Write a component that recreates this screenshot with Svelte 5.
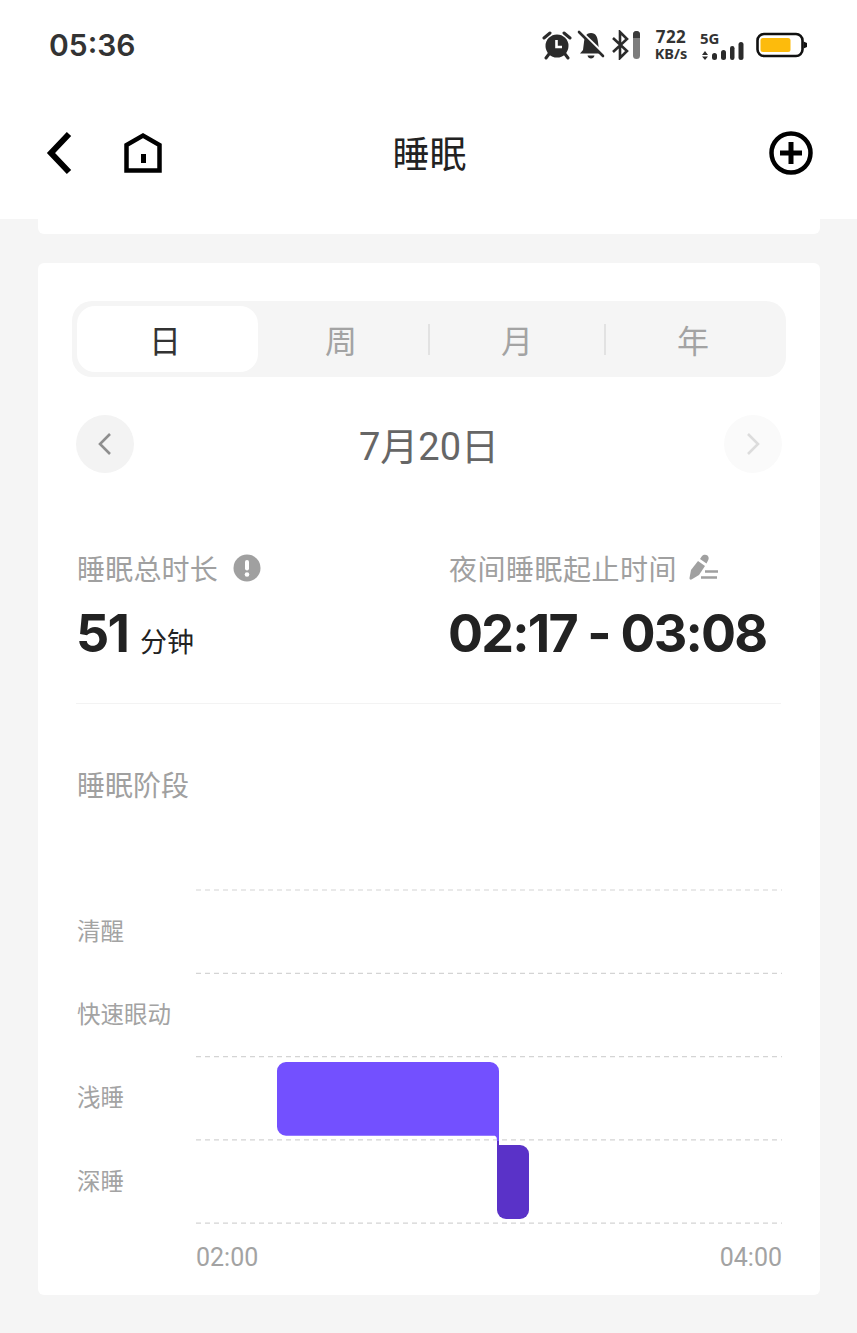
<script>
	const tabs = ['日', '周', '月', '年'];
	const stages = ['清醒', '快速眼动', '浅睡', '深睡'];
	const gridLines = [1, 84.3, 167.6, 250.9, 334.2];
</script>

<div class="page">
	<header class="top">
		<div class="status">
			<span class="clock">05:36</span>
			<div class="status-icons">
				<!-- alarm -->
				<svg width="30" height="30" viewBox="0 0 30 30">
					<path d="M2 8 L8 3 M28 8 L22 3" stroke="#2b2b2b" stroke-width="3" stroke-linecap="round" />
					<path d="M7 24 L4 28 M23 24 L26 28" stroke="#2b2b2b" stroke-width="3" stroke-linecap="round" />
					<circle cx="15" cy="16" r="11.5" fill="#2b2b2b" />
					<path d="M14.5 10 V17 H20" fill="none" stroke="#fff" stroke-width="2.6" />
				</svg>
				<!-- muted bell -->
				<svg class="bell" width="28" height="30" viewBox="0 0 28 30">
					<path d="M14 3 C8.500 3 7.500 8 7 12 L6 20 L3 23.500 H25 L22 20 L21 12 C20.500 7 19 3 14 3 Z" fill="#2b2b2b" />
					<path d="M10.500 25.500 C11 29.500 17 29.500 17.500 25.500 Z" fill="#2b2b2b" />
					<path d="M3 1 L28 25" stroke="#fff" stroke-width="3" />
					<path d="M2 2 L26 26" stroke="#2b2b2b" stroke-width="2.600" stroke-linecap="round" />
				</svg>
				<!-- bluetooth with level -->
				<svg class="bt" width="30" height="30" viewBox="0 0 30 30">
					<path d="M2 8 L16 21 L9 28 V2 L16 9 L2 22" fill="none" stroke="#2b2b2b" stroke-width="2.600" />
					<rect x="22" y="1" width="7" height="28" rx="3.500" fill="#7d7d7d" />
					<path d="M22 4.500 A3.500 3.500 0 0 1 29 4.500 V8 H22 Z" fill="#3a3a3a" />
				</svg>
				<div class="speed">
					<span class="num">722</span>
					<span class="unit">KB/s</span>
				</div>
				<div class="signal">
					<span class="net">5G</span>
					<svg width="44" height="30" viewBox="0 0 44 30">
						<path d="M2 25 L5 21 L8 25 Z M2 26.500 L8 26.500 L5 30 Z" fill="#2b2b2b" />
						<rect x="12" y="23" width="5" height="7" rx="2.500" fill="#2b2b2b" />
						<rect x="21" y="20" width="5" height="10" rx="2.500" fill="#2b2b2b" />
						<rect x="30" y="16" width="4.500" height="14" rx="2.200" fill="#2b2b2b" />
						<rect x="38.500" y="12" width="5" height="18" rx="2.500" fill="#2b2b2b" />
					</svg>
				</div>
				<svg class="battery" width="52" height="26" viewBox="0 0 52 26">
					<rect x="1.500" y="2" width="45" height="22" rx="6.500" fill="#fff" stroke="#111" stroke-width="2.600" />
					<rect x="4.500" y="6" width="30" height="14" rx="2.500" fill="#fdbb0c" />
					<path d="M47.500 9.500 L51 11 V15 L47.500 16.500 Z" fill="#111" />
				</svg>
			</div>
		</div>
		<nav class="title-bar">
			<div class="nav-left">
				<svg width="30" height="44" viewBox="0 0 30 44">
					<path d="M24 3 L6 22 L24 41" fill="none" stroke="#000" stroke-width="6" />
				</svg>
				<svg width="40" height="42" viewBox="0 0 40 42">
					<path d="M3.500 38.500 V13 L20 3.500 L36.500 13 V38.500 Z" fill="none" stroke="#000" stroke-width="4.500" />
					<rect x="18" y="22" width="5" height="9" fill="#000" />
				</svg>
			</div>
			<h1>睡眠</h1>
			<svg width="44" height="44" viewBox="0 0 44 44">
				<circle cx="22" cy="22" r="19.500" fill="none" stroke="#000" stroke-width="4.500" />
				<path d="M22 11 V33 M11 22 H33" stroke="#000" stroke-width="5" />
			</svg>
		</nav>
	</header>

	<div class="stub"></div>

	<section class="card">
		<div class="tabs">
			{#each tabs as tab, i}
				<div class="tab" class:active={i === 0} class:sep={i > 1}>{tab}</div>
			{/each}
		</div>

		<div class="date-row">
			<div class="round">
				<svg width="16" height="26" viewBox="0 0 16 26">
					<path d="M13 3 L3 13 L13 23" fill="none" stroke="#8e8e8e" stroke-width="2.600" />
				</svg>
			</div>
			<span class="date">7月20日</span>
			<div class="round faint">
				<svg width="16" height="26" viewBox="0 0 16 26">
					<path d="M3 3 L13 13 L3 23" fill="none" stroke="#dcdcdc" stroke-width="2.600" />
				</svg>
			</div>
		</div>

		<div class="stats">
			<div class="stat total">
				<div class="label">
					睡眠总时长
					<svg width="28" height="28" viewBox="0 0 28 28">
						<circle cx="14" cy="14" r="13.500" fill="#a0a0a0" />
						<rect x="12" y="6" width="4" height="10.500" rx="2" fill="#fff" />
						<circle cx="14" cy="20.500" r="2.300" fill="#fff" />
					</svg>
				</div>
				<div class="value">51<small>分钟</small></div>
			</div>
			<div class="stat night">
				<div class="label">
					夜间睡眠起止时间
					<svg width="30" height="28" viewBox="0 0 30 28">
						<path d="M9 7 L16 12 L10 21 L2.500 25.500 C1.300 26 0.500 25.300 0.500 24 L2 16 Z" fill="#a0a0a0" />
						<path d="M11 5 L13 2 C14.500 0.300 17 0.300 18.500 1.500 C20 3 20 5 19 6.500 L17.500 9.500 Z" fill="#a0a0a0" />
						<path d="M16 17.500 H29 M12 23.500 H28" stroke="#a0a0a0" stroke-width="2.500" />
					</svg>
				</div>
				<div class="value">02:17 - 03:08</div>
			</div>
		</div>

		<div class="stage-title">睡眠阶段</div>

		<div class="chart">
			<div class="stage-labels">
				{#each stages as stage}
					<span>{stage}</span>
				{/each}
			</div>
			<div class="plot">
				<svg width="586" height="336" viewBox="0 0 586 336">
					{#each gridLines as y}
						<line x1="0" x2="586" y1={y} y2={y} stroke="#d4d4d4" stroke-width="1.200" stroke-dasharray="5 4" />
					{/each}
					<path d="M301 256 V321 A9 9 0 0 0 310 330 H324 A9 9 0 0 0 333 321 V265 A9 9 0 0 0 324 256 Z" fill="#5a32c8" />
					<rect x="301" y="251" width="2" height="6" fill="#5a32c8" />
					<path d="M90 173 H294 A9 9 0 0 1 303 182 V252 H301 C301 249 300.500 246.700 298 246.700 H90 A9 9 0 0 1 81 237.700 V182 A9 9 0 0 1 90 173 Z" fill="#7350ff" />
				</svg>
				<div class="axis">
					<span>02:00</span>
					<span>04:00</span>
				</div>
			</div>
		</div>
	</section>
</div>

<style>
	:global(body) {
		margin: 0;
		background: #f5f5f5;
	}

	.page {
		width: 857px;
		height: 1333px;
		overflow: hidden;
		background: #f5f5f5;
		font-family: 'Noto Sans CJK SC', 'Noto Sans', sans-serif;
		color: #222;
	}

	.top {
		height: 219px;
		background: #fff;
		box-sizing: border-box;
		padding: 0 45px;
	}

	.status {
		height: 90px;
		display: flex;
		align-items: center;
		justify-content: space-between;
		padding: 0 4px;
	}

	.clock {
		font-family: Inter, sans-serif;
		font-size: 30px;
		font-weight: 600;
		color: #333;
	}

	.status-icons {
		display: flex;
		align-items: center;
		gap: 7px;
	}

	.bell {
		margin-left: -2px;
	}

	.bt {
		margin-left: -1px;
	}

	.speed {
		display: flex;
		flex-direction: column;
		align-items: center;
		width: 36px;
		margin-left: 5px;
		font-family: 'Noto Sans', sans-serif;
		font-weight: 700;
		color: #333;
		line-height: 16px;
	}

	.num {
		font-size: 17px;
		letter-spacing: 0.5px;
	}

	.unit {
		font-size: 14.500px;
		white-space: nowrap;
	}

	.signal {
		position: relative;
		width: 44px;
		height: 30px;
		margin-left: 4px;
	}

	.net {
		position: absolute;
		left: 0;
		top: 0;
		font-family: 'Noto Sans', sans-serif;
		font-size: 15px;
		font-weight: 700;
		line-height: 16px;
		color: #333;
	}

	.battery {
		margin-left: 5px;
	}

	.title-bar {
		display: flex;
		align-items: center;
		justify-content: space-between;
		height: 125px;
		position: relative;
		margin-right: -1px;
	}

	.nav-left {
		display: flex;
		align-items: center;
		gap: 48px;
	}

	h1 {
		position: absolute;
		left: 0;
		right: 0;
		top: 37px;
		margin: 0;
		padding-left: 1px;
		text-align: center;
		font-size: 37px;
		font-weight: 400;
		line-height: 50px;
		color: #222;
	}

	.stub {
		height: 15px;
		margin: 0 37px 0 38px;
		background: #fff;
		border-radius: 0 0 6px 6px;
	}

	.card {
		margin: 29px 37px 0 38px;
		height: 1032px;
		box-sizing: border-box;
		padding: 38px 38px 0;
		background: #fff;
		border-radius: 6px;
	}

	.tabs {
		display: grid;
		grid-template-columns: repeat(4, 1fr);
		height: 76px;
		margin: 0 -4px;
		padding: 5px;
		box-sizing: border-box;
		background: #f5f5f5;
		border-radius: 20px;
	}

	.tab {
		position: relative;
		display: flex;
		align-items: center;
		justify-content: center;
		font-size: 32px;
		color: #a3a3a3;
		border-radius: 18px;
	}

	.tab.active {
		margin-right: -5px;
		padding-right: 5px;
		background: #fff;
		color: #333;
	}

	.tab.sep::before {
		content: '';
		position: absolute;
		left: -1px;
		top: 18px;
		height: 31px;
		width: 2px;
		background: #e2e2e2;
	}

	.date-row {
		display: flex;
		align-items: center;
		justify-content: space-between;
		margin-top: 38px;
		height: 58px;
	}

	.round {
		display: flex;
		align-items: center;
		justify-content: center;
		width: 58px;
		height: 58px;
		border-radius: 50%;
		background: #f3f3f3;
	}

	.round.faint {
		background: #fafafa;
	}

	.date {
		padding-top: 6px;
		font-family: Roboto, 'Noto Sans CJK SC', sans-serif;
		font-size: 38px;
		line-height: 58px;
		color: #666;
	}

	.stats {
		display: flex;
		margin-top: 75px;
		height: 156px;
		border-bottom: 1px solid #f3f3f3;
		margin-right: 1px;
		box-sizing: border-box;
		padding-left: 1px;
	}

	.stat {
		flex-shrink: 0;
	}

	.stat.total {
		width: 372px;
	}

	.label {
		display: flex;
		align-items: center;
		gap: 15px;
		height: 40px;
		font-size: 28px;
		line-height: 40px;
		letter-spacing: 0.2px;
		color: #a0a0a0;
	}

	.night .label {
		letter-spacing: 0.5px;
		gap: 12px;
	}

	.value {
		margin-top: 11px;
		margin-left: -1px;
		font-family: Inter, sans-serif;
		font-size: 52px;
		font-weight: 700;
		line-height: 70px;
		letter-spacing: -1.800px;
		color: #222;
		white-space: nowrap;
	}

	.value small {
		margin-left: 12px;
		font-family: 'Noto Sans CJK SC', sans-serif;
		font-size: 27px;
		font-weight: 400;
		letter-spacing: 0;
	}

	.stage-title {
		margin-top: 60px;
		padding-left: 1px;
		font-size: 28px;
		line-height: 40px;
		color: #a0a0a0;
	}

	.chart {
		display: flex;
		margin-top: 85px;
	}

	.stage-labels {
		width: 120px;
		margin-top: -1px;
		padding-left: 1px;
		box-sizing: border-box;
		display: grid;
		grid-auto-rows: 83.400px;
		align-self: start;
	}

	.stage-labels span {
		display: flex;
		align-items: center;
		font-size: 23.500px;
		color: #a3a3a3;
		white-space: nowrap;
	}

	.plot {
		width: 586px;
	}

	.plot svg {
		display: block;
	}

	.axis {
		display: flex;
		justify-content: space-between;
		margin-top: 12px;
		font-family: Roboto, sans-serif;
		font-size: 25px;
		line-height: 42px;
		color: #a3a3a3;
	}
</style>
